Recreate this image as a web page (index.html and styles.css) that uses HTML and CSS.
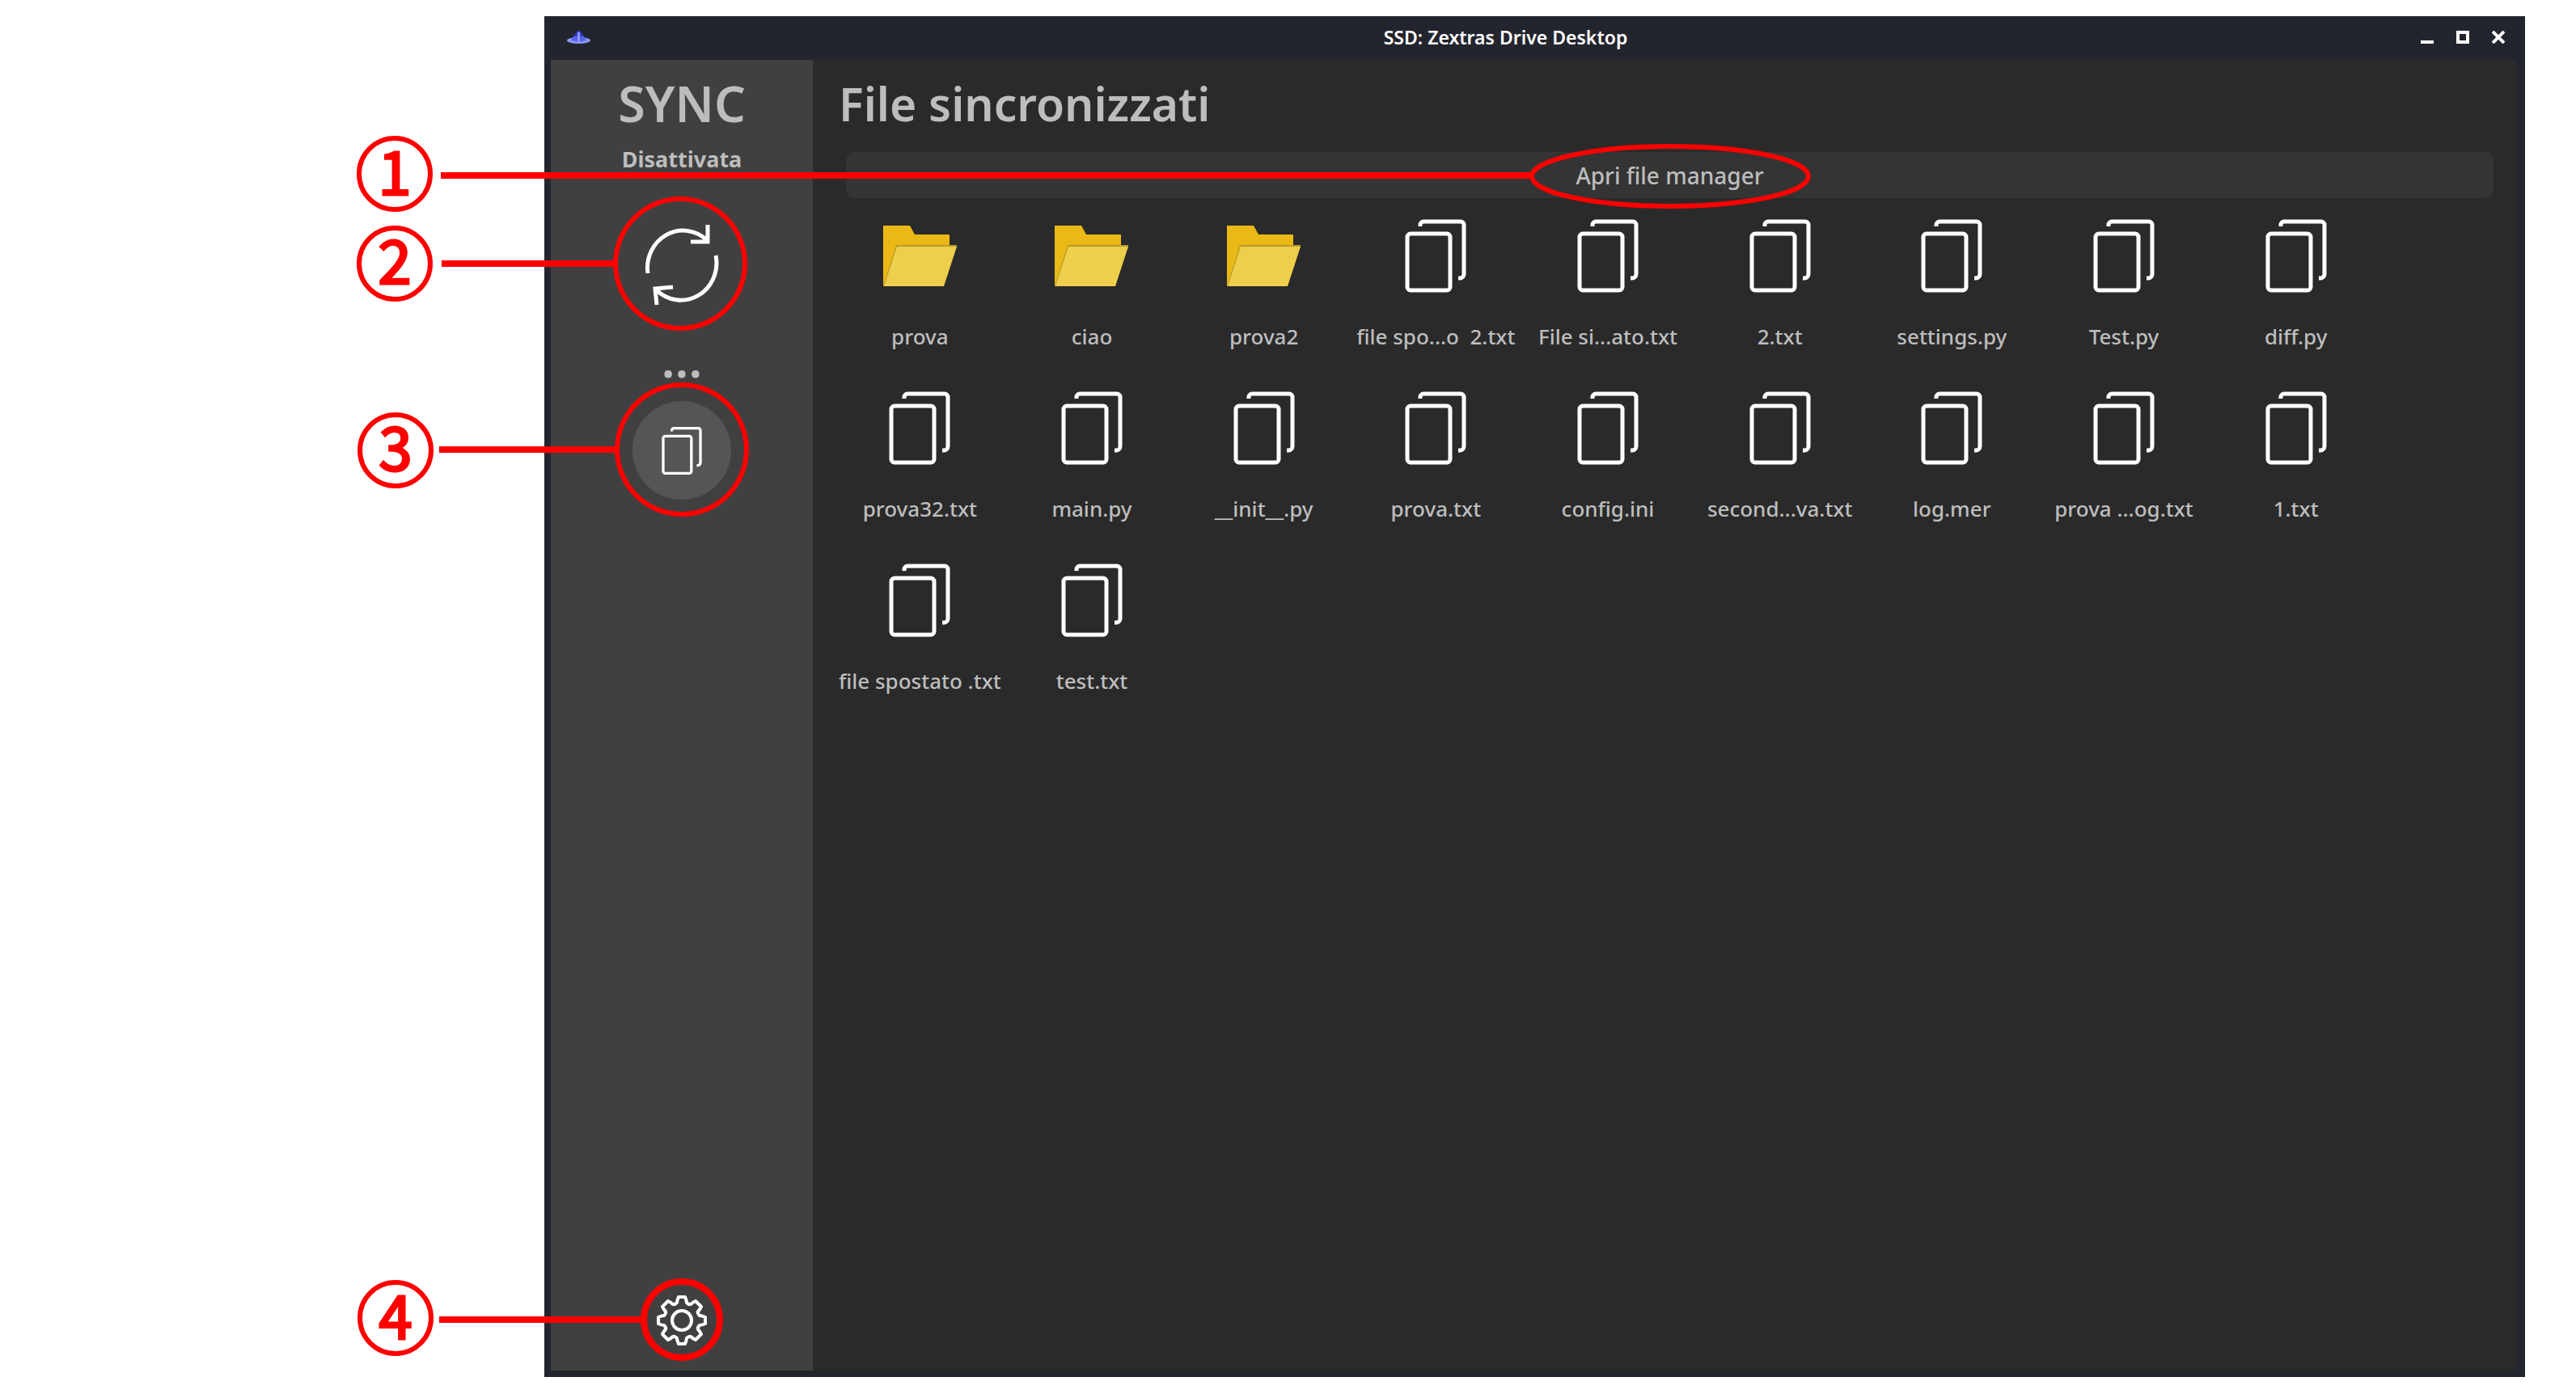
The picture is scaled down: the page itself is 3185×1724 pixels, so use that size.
FILE: index.html
```html
<!DOCTYPE html>
<html lang="it">
<head>
<meta charset="utf-8">
<title>SSD: Zextras Drive Desktop</title>
<link rel="stylesheet" href="styles.css">
</head>
<body>
<svg class="symbols" aria-hidden="true">
  <symbol id="doc" viewBox="0 0 76 91">
    <rect x="3" y="18" width="53" height="70" rx="4"/>
    <path d="M19 9V7a4 4 0 0 1 4-4h46a4 4 0 0 1 4 4v61a5 5 0 0 1-5 5h-2"/>
  </symbol>
  <symbol id="folder" viewBox="0 0 91 91">
    <path fill="#ebb915" d="M0 8h33l6 11h43v20L0 83z"/>
    <path fill="#b89b2c" d="M16 32h75v2H17L2 83H0z"/>
    <path fill="#eecf4b" d="M17 34h74L75 83H1z"/>
  </symbol>
</svg>

<main class="window">
  <header class="titlebar">
    <svg class="logo" viewBox="0 0 29 16" aria-hidden="true">
      <path fill="#2f3bc4" d="M13 0h3l8 11H5z"/>
      <ellipse cx="14.5" cy="12" rx="14.5" ry="4" fill="#8f98f5"/>
      <path fill="#5763e6" d="M8 7h13l3 5-9 2-10-2z"/>
      <path fill="#8f98f5" d="M13 2h3v12h-3z"/>
    </svg>
    <span class="title">SSD: Zextras Drive Desktop</span>
    <div class="controls">
      <button class="control" aria-label="Riduci"><svg viewBox="0 0 16 16"><path d="M0 14h16"/></svg></button>
      <button class="control" aria-label="Ingrandisci"><svg viewBox="0 0 16 16"><path d="M2 2h12v12H2z"/></svg></button>
      <button class="control" aria-label="Chiudi"><svg viewBox="0 0 16 16"><path d="M1 1l14 14M15 1L1 15"/></svg></button>
    </div>
  </header>

  <div class="body">
    <aside class="sidebar">
      <h2 class="brand">SYNC</h2>
      <p class="status">Disattivata</p>
      <button class="sync" aria-label="Sincronizza">
        <svg viewBox="0 0 94 101"><path d="M5 61A44 46 0 0 1 78 20M79 1v21H58M89 39A44 46 0 0 1 15 81M16 100L14 80l22-2"/></svg>
      </button>
      <p class="brand dots">...</p>
      <button class="files" aria-label="File"><svg class="line-icon"><use href="#doc"/></svg></button>
      <button class="settings" aria-label="Impostazioni">
        <svg viewBox="-31 -31 62 62">
          <path d="M-4 -29H4Q6-24 6-22Q9-19 11-20Q13-22 17-24L24-17Q22-13 20-11Q19-9 22-6Q24-6 29-4V4Q24 6 22 6Q19 9 20 11Q22 13 24 17L17 24Q13 22 11 20Q9 19 6 22Q6 24 4 29H-4Q-6 24-6 22Q-9 19-11 20Q-13 22-17 24L-24 17Q-22 13-20 11Q-19 9-22 6Q-24 6-29 4V-4Q-24-6-22-6Q-19-9-20-11Q-22-13-24-17L-17-24Q-13-22-11-20Q-9-19-6-22Q-6-24-4-29z"/>
          <circle r="12"/>
        </svg>
      </button>
    </aside>

    <section class="content">
      <h1 class="heading">File sincronizzati</h1>
      <button class="open">Apri file manager</button>
      <ul class="grid">
        <li class="tile"><svg class="folder"><use href="#folder"/></svg><span>prova</span></li>
        <li class="tile"><svg class="folder"><use href="#folder"/></svg><span>ciao</span></li>
        <li class="tile"><svg class="folder"><use href="#folder"/></svg><span>prova2</span></li>
        <li class="tile"><svg class="line-icon"><use href="#doc"/></svg><span>file spo...o&nbsp; 2.txt</span></li>
        <li class="tile"><svg class="line-icon"><use href="#doc"/></svg><span>File si...ato.txt</span></li>
        <li class="tile"><svg class="line-icon"><use href="#doc"/></svg><span>2.txt</span></li>
        <li class="tile"><svg class="line-icon"><use href="#doc"/></svg><span>settings.py</span></li>
        <li class="tile"><svg class="line-icon"><use href="#doc"/></svg><span>Test.py</span></li>
        <li class="tile"><svg class="line-icon"><use href="#doc"/></svg><span>diff.py</span></li>
        <li class="tile"><svg class="line-icon"><use href="#doc"/></svg><span>prova32.txt</span></li>
        <li class="tile"><svg class="line-icon"><use href="#doc"/></svg><span>main.py</span></li>
        <li class="tile"><svg class="line-icon"><use href="#doc"/></svg><span>__init__.py</span></li>
        <li class="tile"><svg class="line-icon"><use href="#doc"/></svg><span>prova.txt</span></li>
        <li class="tile"><svg class="line-icon"><use href="#doc"/></svg><span>config.ini</span></li>
        <li class="tile"><svg class="line-icon"><use href="#doc"/></svg><span>second...va.txt</span></li>
        <li class="tile"><svg class="line-icon"><use href="#doc"/></svg><span>log.mer</span></li>
        <li class="tile"><svg class="line-icon"><use href="#doc"/></svg><span>prova ...og.txt</span></li>
        <li class="tile"><svg class="line-icon"><use href="#doc"/></svg><span>1.txt</span></li>
        <li class="tile"><svg class="line-icon"><use href="#doc"/></svg><span>file spostato .txt</span></li>
        <li class="tile"><svg class="line-icon"><use href="#doc"/></svg><span>test.txt</span></li>
      </ul>
    </section>
  </div>
</main>

<!-- Numbered callouts drawn over the window -->
<svg class="callouts" viewBox="0 0 2260 1724">
  <g class="badge">
    <circle cx="488" cy="215" r="44"/>
    <circle cx="488" cy="326" r="44"/>
    <circle cx="489" cy="557" r="44"/>
    <circle cx="489" cy="1630" r="44"/>
  </g>
  <g class="leader">
    <path d="M545 217H1894"/>
    <path d="M546 326H760"/>
    <path d="M543 556H763"/>
    <path d="M543 1632H796"/>
  </g>
  <g class="ring">
    <ellipse cx="2065" cy="218" rx="171" ry="37"/>
    <circle cx="841" cy="326" r="80"/>
    <circle cx="843" cy="556" r="80"/>
    <circle class="thick" cx="843" cy="1632" r="47"/>
  </g>
  <g class="number">
    <text x="488" y="241">1</text>
    <text x="488" y="351">2</text>
    <text x="489" y="582">3</text>
    <text x="489" y="1656">4</text>
  </g>
</svg>
</body>
</html>
```
FILE: styles.css
```css
* {
  box-sizing: border-box;
}

body {
  position: relative;
  display: flex;
  min-height: 100vh;
  margin: 0;
  padding: 20px 63px 21px 673px;
  background: #fff;
  color: #bdbdbd;
  font-family: "Noto Sans", "Open Sans", sans-serif;
}

h1, h2, p, ul {
  margin: 0;
  padding: 0;
}

button {
  display: block;
  margin: 0;
  padding: 0;
  border: 0;
  background: none;
  color: inherit;
  font: inherit;
}

svg {
  display: block;
  fill: none;
}

.symbols {
  position: absolute;
  width: 0;
  height: 0;
}

.window {
  display: flex;
  flex: 1;
  flex-direction: column;
  padding: 0 11px 8px 8px;
  background: #23252e;
}

.titlebar {
  display: flex;
  align-items: center;
  height: 54px;
  padding: 0 14px 2px 20px;
}

.logo {
  width: 29px;
  height: 16px;
}

.title {
  flex: 1;
  color: #fff;
  font-size: 23px;
  font-weight: 600;
  line-height: 32px;
  text-align: center;
}

.controls {
  display: flex;
  gap: 28px;
}

.control svg {
  width: 16px;
  height: 16px;
  stroke: #fff;
  stroke-width: 4;
}

.body {
  display: flex;
  flex: 1;
}

.sidebar {
  display: flex;
  flex-direction: column;
  align-items: center;
  width: 324px;
  padding: 13px 0 31px;
  background: #404040;
}

.brand {
  font-size: 61px;
  font-weight: 600;
  line-height: 82px;
}

.heading {
  font-size: 57px;
  font-weight: 600;
  line-height: 82px;
}

.status {
  margin-top: 9px;
  font-size: 27px;
  font-weight: 700;
  line-height: 38px;
}

.sync {
  margin-top: 61px;
}

.sync svg {
  width: 94px;
  height: 101px;
  stroke: #fff;
  stroke-width: 5;
}

.dots {
  margin-top: 25px;
}

.files {
  display: flex;
  align-items: center;
  justify-content: center;
  width: 122px;
  height: 122px;
  margin-top: 11px;
  border-radius: 50%;
  background: #555;
}

.line-icon {
  width: 76px;
  height: 91px;
  stroke: #fff;
  stroke-width: 5;
}

.files .line-icon {
  width: 50px;
  height: 61px;
}

.settings {
  margin-top: auto;
}

.settings svg {
  width: 62px;
  height: 62px;
  stroke: #fff;
  stroke-width: 4;
  stroke-linejoin: round;
}

.content {
  flex: 1;
  padding: 13px 28px 0 32px;
  background: #2a2a2a;
}

.open {
  width: calc(100% - 9px);
  height: 57px;
  margin: 19px 0 0 9px;
  border-radius: 10px;
  background: #343434;
  font-size: 28px;
  font-weight: 500;
  line-height: 38px;
}

.grid {
  display: grid;
  grid-template-columns: repeat(9, 1fr);
  grid-auto-rows: 213px;
  margin: 26px 138px 0 -6px;
  list-style: none;
}

.tile {
  display: flex;
  flex-direction: column;
  align-items: center;
  gap: 36px;
  font-size: 26px;
  font-weight: 500;
  line-height: 36px;
  white-space: nowrap;
}

.folder {
  width: 91px;
  height: 91px;
}

.callouts {
  position: absolute;
  top: 0;
  left: 0;
  width: 2260px;
  height: 1724px;
  stroke: #f00;
  pointer-events: none;
}

.badge,
.ring {
  stroke-width: 6;
}

.ring .thick,
.leader {
  stroke-width: 8;
}

.number {
  fill: #f00;
  stroke-width: 3;
  font-family: "Noto Sans CJK JP", sans-serif;
  font-size: 74px;
  font-weight: 400;
  text-anchor: middle;
}
```
